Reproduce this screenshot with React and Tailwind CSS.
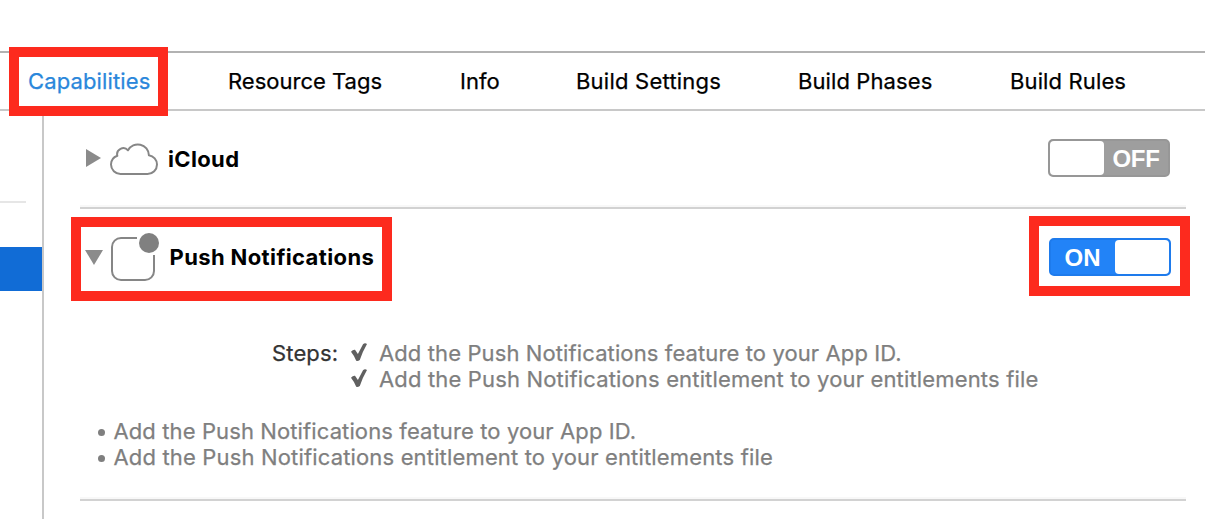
import React from 'react';

const tabs = [
  { label: 'Capabilities', pos: 'w-[200px] text-[#2a87db] tracking-[0.13px]' },
  { label: 'Resource Tags', pos: 'w-[232px]' },
  { label: 'Info', pos: 'w-[116px]' },
  { label: 'Build Settings', pos: 'w-[222px] tracking-[0.23px]' },
  { label: 'Build Phases', pos: 'w-[212px] tracking-[0.1px]' },
  { label: 'Build Rules', pos: 'tracking-[0.13px]' },
];

const steps = [
  { text: 'Add the Push Notifications feature to your App ID.', tracking: 'tracking-[0.11px]' },
  { text: 'Add the Push Notifications entitlement to your entitlements file', tracking: 'tracking-[0.16px]' },
];

function Highlight({ className }) {
  return <div className={`pointer-events-none absolute border-[10px] border-[#fd2a1e] ${className}`} />;
}

function Separator() {
  return <div className="ml-9 h-1 w-[1106px] shrink-0 border-t-2 border-b-2 border-t-[#f8f8f8] border-b-[#d2d2d2]" />;
}

function Toggle({ on }) {
  return (
    <div
      className={`flex h-[38px] w-[122px] items-center rounded-[5px] border-2 font-['Liberation_Sans',sans-serif] text-[24px] leading-none font-bold text-white ${
        on ? 'flex-row-reverse border-[#1e7bec] bg-[#2283f7]' : 'border-[#979797] bg-[#9e9e9e]'
      }`}
    >
      <span className="h-[34px] w-[54px] rounded-[4px] bg-white" />
      <span className={`flex-1 pt-0.5 text-center ${on ? 'pr-px' : 'tracking-[-0.3px]'}`}>{on ? 'ON' : 'OFF'}</span>
    </div>
  );
}

function Check() {
  return (
    <svg className="h-[20px] w-[18px]" viewBox="0 0 18 20">
      <path d="M1 8.8Q3 6.4 5 6.8L7.9 11L13 1.2Q14.8 -0.4 17 0.9Q12.8 8 9.8 17Q8 18.3 6.2 17.8Q4.3 12.8 1 8.8Z" fill="#606060" />
    </svg>
  );
}

export default function App() {
  return (
    <div className="relative flex h-[519px] w-[1205px] flex-col overflow-hidden bg-white pt-[51px] font-['Inter',sans-serif] text-[22px] leading-[26px] text-black">
      <nav className="flex h-[60px] shrink-0 items-center border-t-2 border-b-2 border-t-[#b2b2b2] border-b-[#c8c8c8] pl-7 [-webkit-text-stroke:0.25px]">
        {tabs.map((t) => (
          <span key={t.label} className={`shrink-0 whitespace-nowrap ${t.pos}`}>{t.label}</span>
        ))}
      </nav>
      <div className="flex flex-1">
        <aside className="flex w-11 shrink-0 flex-col border-r-2 border-[#c8c8c8] pt-[90px]">
          <div className="h-0.5 w-[26px] bg-[#e6e6e6]" />
          <div className="mt-11 h-11 w-full bg-[#116cd6]" />
        </aside>
        <main className="flex flex-1 flex-col">
          <div className="flex h-[94px] shrink-0 items-center pr-[35px] pl-[42px]">
            <svg className="h-[18px] w-[15px]" viewBox="0 0 15 18"><path d="M0 0L15 9L0 18Z" fill="#8b8b8b" /></svg>
            <svg className="mt-0.5 ml-[9px] h-[32px] w-[48px]" viewBox="0 0 48 32">
              <path d="M10.5 31H37.5A9.5 9.5 0 0 0 47 21.5A9.4 9.4 0 0 0 38.9 12.2A11.1 11.1 0 0 0 18 7.3A6.2 6.2 0 0 0 7.3 12.8A9.5 9.5 0 0 0 1 21.6A9.5 9.5 0 0 0 10.5 31Z" fill="none" stroke="#868686" strokeWidth="2" strokeLinejoin="round" />
            </svg>
            <span className="mt-0.5 ml-2.5 flex-1 font-bold tracking-[0.35px]">iCloud</span>
            <Toggle />
          </div>
          <Separator />
          <div className="flex h-24 shrink-0 items-center pr-[34px] pl-[41px]">
            <svg className="h-[15px] w-[18px]" viewBox="0 0 18 15"><path d="M0 0H18L9 15Z" fill="#8b8b8b" /></svg>
            <svg className="ml-2 h-[48px] w-[48px]" viewBox="0 0 48 48">
              <path d="M26 5H10A9 9 0 0 0 1 14V38A9 9 0 0 0 10 47H34A9 9 0 0 0 43 38V22" fill="none" stroke="#868686" strokeWidth="2" />
              <circle cx="38" cy="10" r="10" fill="#808080" />
            </svg>
            <span className="ml-[10.5px] flex-1 font-bold tracking-[0.38px]">Push Notifications</span>
            <Toggle on />
          </div>
          <div className="mt-[35px] flex pl-[228px] [-webkit-text-stroke:0.25px]">
            <span className="w-[78px] tracking-[0.15px] text-[#333]">Steps:</span>
            <div className="text-[#7f7f7f]">
              {steps.map((s) => (
                <div key={s.text} className="flex items-center">
                  <Check />
                  <span className={`ml-[11px] whitespace-nowrap ${s.tracking}`}>{s.text}</span>
                </div>
              ))}
            </div>
          </div>
          <ul className="mt-[26px] mb-[27px] pl-[54px] text-[#7f7f7f] [-webkit-text-stroke:0.25px]">
            {steps.map((s) => (
              <li key={s.text} className="flex items-center">
                <span className="mt-[3px] mr-2 size-[7px] rounded-full bg-[#7f7f7f]" />
                <span className={`ml-[0.5px] whitespace-nowrap ${s.tracking}`}>{s.text}</span>
              </li>
            ))}
          </ul>
          <Separator />
        </main>
      </div>
      <Highlight className="top-[47px] left-[9px] h-[69px] w-[159px]" />
      <Highlight className="top-[217px] left-[71px] h-[84px] w-[321px]" />
      <Highlight className="top-[216px] left-[1029px] h-[80px] w-[161px]" />
    </div>
  );
}
